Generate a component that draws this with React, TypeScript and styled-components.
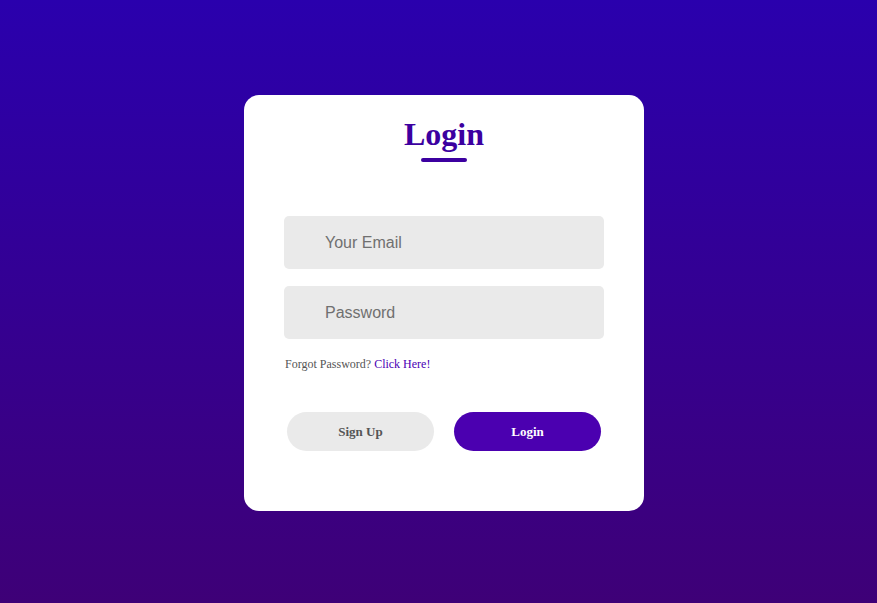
import styled, { createGlobalStyle } from "styled-components";

const GlobalStyle = createGlobalStyle`
  html, body {
    margin: 0;
    padding: 0;
    height: 100%;
  }
  #root {
    height: 100%;
  }
`;

const Page = styled.div`
  display: flex;
  align-items: center;
  justify-content: center;
  height: 603px;
  padding-left: 11px;
  padding-top: 3px;
  box-sizing: border-box;
  background: linear-gradient(180deg, #2a00ad 0%, #3e0077 100%);
`;

const Card = styled.div`
  display: flex;
  flex-direction: column;
  width: 400px;
  height: 416px;
  padding: 21px 40px 0;
  box-sizing: border-box;
  background: #ffffff;
  border-radius: 15px;
`;

const Title = styled.h1`
  margin: 0;
  font-family: "Liberation Serif", "Times New Roman", serif;
  font-size: 32px;
  font-weight: 700;
  line-height: 37px;
  text-align: center;
  color: #3c00a0;
`;

const Underline = styled.div`
  width: 46px;
  height: 4px;
  margin: 5px auto 0;
  border-radius: 2px;
  background: #3c00a0;
`;

const Fields = styled.div`
  display: flex;
  flex-direction: column;
  gap: 17px;
  margin-top: 54px;
`;

const Input = styled.input`
  width: 320px;
  height: 53px;
  padding: 0 0 0 41px;
  box-sizing: border-box;
  border: none;
  border-radius: 5px;
  outline: none;
  background: #eaeaea;
  font-family: "Liberation Sans", Arial, sans-serif;
  font-size: 16px;
  color: #333;

  &::placeholder {
    color: #707070;
  }
`;

const Forgot = styled.p`
  margin: 18px 0 0 1px;
  font-family: "Liberation Serif", "Times New Roman", serif;
  font-size: 12px;
  color: #555555;

  a {
    color: #4a00b4;
    text-decoration: none;
  }
`;

const Buttons = styled.div`
  display: flex;
  justify-content: space-between;
  padding: 0 3px;
  margin-top: 40px;
`;

const Button = styled.button<{ $primary?: boolean }>`
  width: 147px;
  height: 39px;
  border: none;
  border-radius: 20px;
  background: ${(p) => (p.$primary ? "#4b00b0" : "#eaeaea")};
  color: ${(p) => (p.$primary ? "#ffffff" : "#555555")};
  font-family: "Liberation Serif", "Times New Roman", serif;
  font-size: 13px;
  font-weight: 700;
  cursor: pointer;
`;

export default function App() {
  return (
    <>
      <GlobalStyle />
      <Page>
        <Card>
          <Title>Login</Title>
          <Underline />
          <Fields>
            <Input type="email" placeholder="Your Email" />
            <Input type="password" placeholder="Password" />
          </Fields>
          <Forgot>
            Forgot Password? <a href="#">Click Here!</a>
          </Forgot>
          <Buttons>
            <Button>Sign Up</Button>
            <Button $primary>Login</Button>
          </Buttons>
        </Card>
      </Page>
    </>
  );
}
